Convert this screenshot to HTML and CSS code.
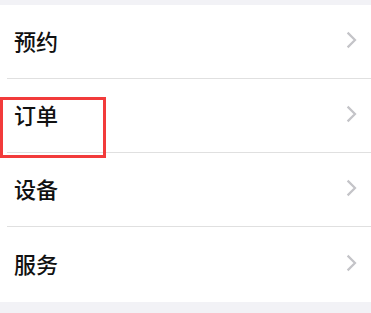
FILE: index.html
```html
<!DOCTYPE html>
<html lang="zh">
<head>
<meta charset="utf-8">
<link rel="stylesheet" href="styles.css">
</head>
<body>
<div class="page">
  <ul class="list">
    <li class="row"><span class="label">预约</span><svg class="chev" viewBox="0 0 11 18" width="11" height="18"><path d="M1.6 1.6 L9 9 L1.6 16.4" fill="none" stroke="#c4c4c8" stroke-width="2.2"/></svg></li>
    <li class="row"><span class="label">订单</span><svg class="chev" viewBox="0 0 11 18" width="11" height="18"><path d="M1.6 1.6 L9 9 L1.6 16.4" fill="none" stroke="#c4c4c8" stroke-width="2.2"/></svg></li>
    <li class="row"><span class="label">设备</span><svg class="chev" viewBox="0 0 11 18" width="11" height="18"><path d="M1.6 1.6 L9 9 L1.6 16.4" fill="none" stroke="#c4c4c8" stroke-width="2.2"/></svg></li>
    <li class="row"><span class="label">服务</span><svg class="chev" viewBox="0 0 11 18" width="11" height="18"><path d="M1.6 1.6 L9 9 L1.6 16.4" fill="none" stroke="#c4c4c8" stroke-width="2.2"/></svg></li>
  </ul>
  <div class="highlight"></div>
</div>
</body>
</html>
```
FILE: styles.css
```css
html, body {
  margin: 0;
  padding: 0;
  background: #f2f2f6;
}
.page {
  position: relative;
  width: 371px;
  height: 313px;
  padding-top: 5px;
  box-sizing: border-box;
  font-family: "Noto Sans CJK SC", "Noto Sans", sans-serif;
}
.list {
  list-style: none;
  margin: 0;
  padding: 0 0 0 7px;
  background: #ffffff;
}
.row {
  display: flex;
  align-items: center;
  justify-content: space-between;
  height: 74px;
  padding: 0 14px 4px 7px;
  border-bottom: 1px solid #e0e0e0;
  box-sizing: border-box;
}
.row:last-child {
  border-bottom: none;
  height: 75px;
}
.label {
  font-size: 22px;
  font-weight: 500;
  color: #111111;
  line-height: 1;
}
.chev {
  display: block;
}
.highlight {
  position: absolute;
  left: 0;
  top: 97px;
  width: 106px;
  height: 61px;
  border: 3px solid #f23b3b;
  box-sizing: border-box;
}
```
